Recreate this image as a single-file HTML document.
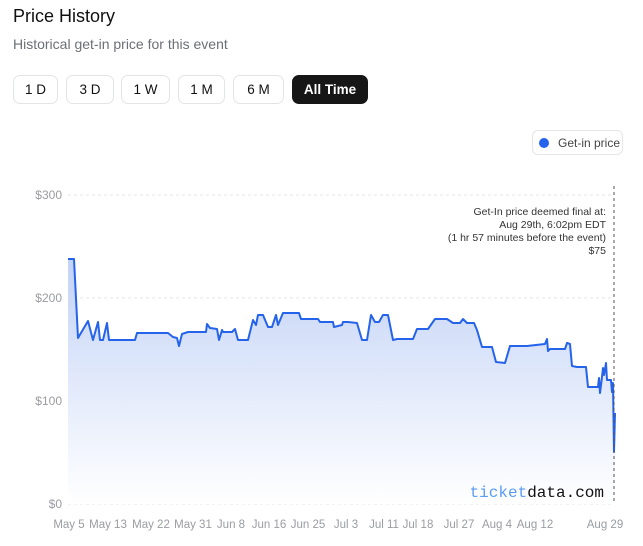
<!DOCTYPE html>
<html><head><meta charset="utf-8"><style>
body{margin:0;width:643px;height:546px;background:#fff;font-family:"Liberation Sans",sans-serif;position:relative;overflow:hidden}
.t{position:absolute;left:13px;top:6px;font-size:18px;color:#111;font-weight:500}
.s{position:absolute;left:13px;top:36px;font-size:14px;color:#6b6f76}
.b{position:absolute;top:75px;height:29px;border:1px solid #e3e4e6;border-radius:7px;box-sizing:border-box;font-size:13.5px;color:#111;display:flex;align-items:center;justify-content:center;font-weight:500}
.b.a{background:#161616;color:#fff;border-color:#161616;font-weight:bold}
.lg{position:absolute;left:532px;top:130px;width:91px;height:25px;border:1px solid #e5e6e8;border-radius:6px;box-sizing:border-box;font-size:12px;color:#444;display:flex;align-items:center;white-space:nowrap}
.lg i{width:10px;height:10px;border-radius:50%;background:#2563eb;margin:0 9px 0 6px;flex:none}
</style></head><body>
<div class="t">Price History</div>
<div class="s">Historical get-in price for this event</div>
<div class="b" style="left:13px;width:45px">1 D</div>
<div class="b" style="left:66px;width:48px">3 D</div>
<div class="b" style="left:121px;width:49px">1 W</div>
<div class="b" style="left:178px;width:47px">1 M</div>
<div class="b" style="left:233px;width:51px">6 M</div>
<div class="b a" style="left:292px;width:76px">All Time</div>
<div class="lg"><i></i>Get-in price</div>
<svg width="643" height="546" style="position:absolute;left:0;top:0" font-family="Liberation Sans, sans-serif">
<defs><linearGradient id="g" x1="0" y1="0" x2="0" y2="1"><stop offset="0" stop-color="#c3d3f6"/><stop offset="1" stop-color="#fff"/></linearGradient></defs>
<g stroke="#e4e4e4" stroke-dasharray="3 3" stroke-width="1">
<line x1="68" y1="195" x2="614" y2="195"/><line x1="68" y1="298" x2="614" y2="298"/><line x1="68" y1="401" x2="614" y2="401"/><line x1="68" y1="504" x2="614" y2="504"/></g>
<g fill="#9a9ca2" font-size="12" text-anchor="end"><text x="62" y="199">$300</text><text x="62" y="302">$200</text><text x="62" y="405">$100</text><text x="62" y="508">$0</text></g>
<path d="M68,259 L74,259 L78,338 L88,321 L93,340 L98,322 L100,340 L103,340 L107,323 L109,340 L135,340 L137,333 L168,333 L173,337 L177,338 L179,346 L182,334 L188,332 L206,332 L207,324 L210,328 L217,329 L219,340 L222,330 L223,332 L232,332 L235,329 L238,340 L248,340 L253,320 L256,325 L258,315 L263,315 L268,327 L272,327 L276,315 L278,325 L283,313 L299,313 L301,319 L318,319 L320,322 L333,322 L334,327 L342,325 L343,322 L348,322 L357,323 L362,340 L367,340 L371,315 L375,322 L379,322 L383,315 L388,315 L393,340 L397,339 L413,339 L417,329 L428,329 L435,319 L447,319 L453,323 L460,323 L463,319 L467,323 L474,323 L477,330 L482,347 L492,347 L496,362 L505,363 L510,346 L527,346 L545,344 L547,339 L548,351 L550,349 L565,349 L567,343 L570,344 L572,366 L577,367 L586,367 L588,387 L598,387 L599,378 L600,393 L602,377 L603,368 L604,375 L606,363 L607,380 L611,380 L612,392 L613,383 L614,452 L615,413 L615,504 L68,504 Z" fill="url(#g)"/>
<path d="M68,259 L74,259 L78,338 L88,321 L93,340 L98,322 L100,340 L103,340 L107,323 L109,340 L135,340 L137,333 L168,333 L173,337 L177,338 L179,346 L182,334 L188,332 L206,332 L207,324 L210,328 L217,329 L219,340 L222,330 L223,332 L232,332 L235,329 L238,340 L248,340 L253,320 L256,325 L258,315 L263,315 L268,327 L272,327 L276,315 L278,325 L283,313 L299,313 L301,319 L318,319 L320,322 L333,322 L334,327 L342,325 L343,322 L348,322 L357,323 L362,340 L367,340 L371,315 L375,322 L379,322 L383,315 L388,315 L393,340 L397,339 L413,339 L417,329 L428,329 L435,319 L447,319 L453,323 L460,323 L463,319 L467,323 L474,323 L477,330 L482,347 L492,347 L496,362 L505,363 L510,346 L527,346 L545,344 L547,339 L548,351 L550,349 L565,349 L567,343 L570,344 L572,366 L577,367 L586,367 L588,387 L598,387 L599,378 L600,393 L602,377 L603,368 L604,375 L606,363 L607,380 L611,380 L612,392 L613,383 L614,452 L615,413" fill="none" stroke="#2563eb" stroke-width="2" stroke-linejoin="round"/>
<line x1="614" y1="186" x2="614" y2="504" stroke="#555" stroke-dasharray="3 3"/>
<g fill="#333" font-size="10.5" text-anchor="end"><text x="606" y="215">Get-In price deemed final at:</text><text x="606" y="228">Aug 29th, 6:02pm EDT</text><text x="606" y="241">(1 hr 57 minutes before the event)</text><text x="606" y="254">$75</text></g>
<text x="604" y="497" font-family="Liberation Mono, monospace" font-size="16" text-anchor="end"><tspan fill="#5b9cf6">ticket</tspan><tspan fill="#111">data.com</tspan></text>
<g fill="#9a9ca2" font-size="11.5" text-anchor="middle"><text x="69" y="528">May 5</text><text x="108" y="528">May 13</text><text x="151" y="528">May 22</text><text x="193" y="528">May 31</text><text x="231" y="528">Jun 8</text><text x="269" y="528">Jun 16</text><text x="308" y="528">Jun 25</text><text x="346" y="528">Jul 3</text><text x="384" y="528">Jul 11</text><text x="418" y="528">Jul 18</text><text x="459" y="528">Jul 27</text><text x="497" y="528">Aug 4</text><text x="535" y="528">Aug 12</text><text x="605" y="528">Aug 29</text></g>
</svg>
</body></html>
